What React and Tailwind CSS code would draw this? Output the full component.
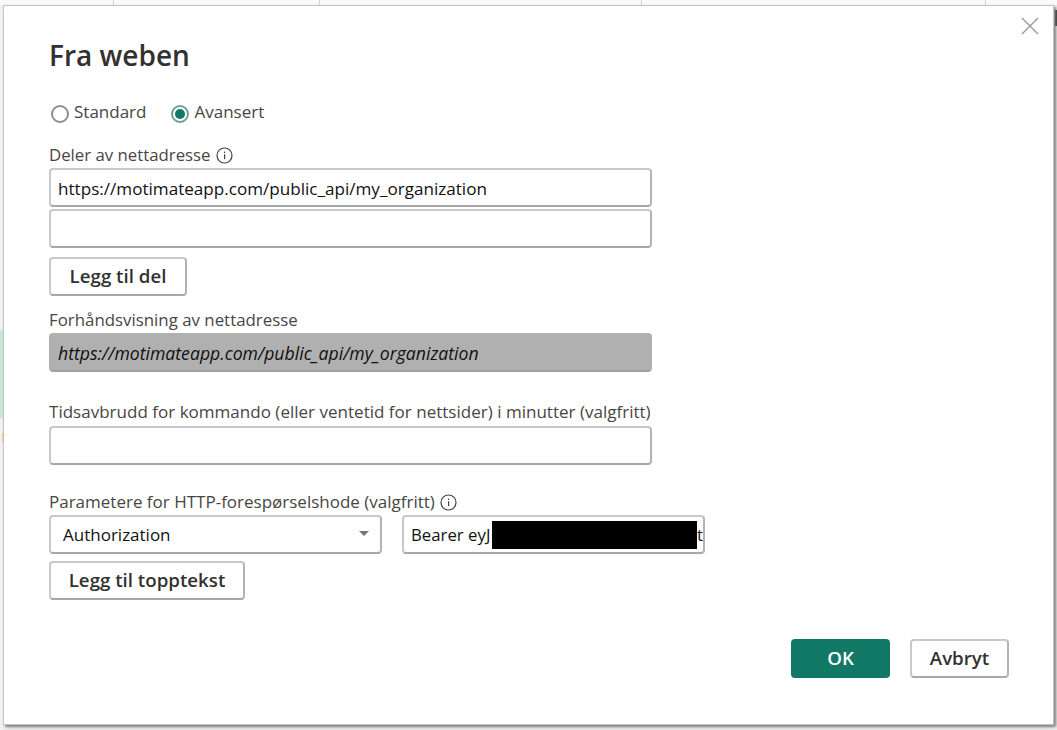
import React from "react";

const fieldClass =
  "h-[39px] rounded-[4px] border-2 border-[#c8c8c8] border-r-[#b4b4b4] border-b-[#a8a8a8] bg-white outline-none";

const buttonClass =
  "h-[39px] rounded-[4px] border-2 border-[#c8c8c8] border-r-[#b4b4b4] border-b-[#a8a8a8] bg-white text-[18.7px] font-semibold text-[#323130]";

const InfoIcon = () => (
  <svg width="17" height="17" viewBox="0 0 17 17" fill="none" className="ml-[5px]">
    <circle cx="8.5" cy="8.5" r="7.5" stroke="#444" strokeWidth="1.2" />
    <rect x="8" y="7.2" width="1.2" height="5" fill="#444" />
    <rect x="8" y="4.6" width="1.2" height="1.4" fill="#444" />
  </svg>
);

const Radio = ({ label, checked }) => (
  <label className="flex items-center">
    <span
      className={`mt-[1px] flex h-[18px] w-[18px] items-center justify-center rounded-full border-2 ${
        checked ? "border-[#6f9f94]" : "border-[#8f8f8f]"
      }`}
    >
      {checked && <span className="h-[10px] w-[10px] rounded-full bg-[#117865]" />}
    </span>
    <span className="ml-[5px] -mt-[3px]">{label}</span>
  </label>
);

export default function App() {
  return (
    <div className="relative h-screen w-full overflow-hidden bg-[#f1f1ef] font-['Open_Sans','Noto_Sans',sans-serif] text-[17px] text-[#484644]">
      {/* page behind the dialog */}
      <div className="flex h-[5px] bg-[#fafafa]">
        <div className="w-[114px] border-r border-[#d4d4d4]" />
        <div className="w-[206px] border-r border-[#d4d4d4]" />
        <div className="w-[322px] border-r border-[#d4d4d4]" />
        <div className="w-[344px] border-r border-[#d4d4d4]" />
      </div>
      <div className="absolute left-0 top-[330px] h-[88px] w-[3px] bg-[#c8e8d6]" />
      <div className="absolute left-[2px] top-[433px] h-[9px] w-[1px] bg-[#ffd27a]" />
      <div className="absolute right-0 top-[10px] h-[16px] w-[2px] bg-[#333]" />

      <div className="absolute left-[3px] top-[5px] h-[720px] w-[1051px] border border-[#c4c4c4] bg-white pl-[45px] shadow-[2px_2px_3px_#777]">
        <svg width="18" height="18" viewBox="0 0 18 18" className="absolute right-[14px] top-[11px]">
          <path d="M1 1 L17 17 M17 1 L1 17" stroke="#999" strokeWidth="1.4" />
        </svg>

        <h1 className="mt-[27px] text-[28px] leading-[44px] font-semibold text-[#323130]">Fra weben</h1>

        <div className="mt-[24px] flex h-[24px] items-center gap-[25px] pl-[2px]">
          <Radio label="Standard" />
          <Radio label="Avansert" checked />
        </div>

        <div className="mt-[19px] flex h-[22px] items-center text-[16.8px]">
          Deler av nettadresse
          <InfoIcon />
        </div>
        <input
          readOnly
          value="https://motimateapp.com/public_api/my_organization"
          className={`${fieldClass} mt-[2px] block w-[603px] px-[7px] pt-[1px] text-[17.1px] text-[#111]`}
        />
        <input readOnly className={`${fieldClass} mt-[2px] block w-[603px] px-[7px]`} />
        <button className={`${buttonClass} mt-[9px] block w-[138px]`}>Legg til del</button>

        <div className="mt-[13px] h-[22px] text-[16.85px] leading-[22px]">Forhåndsvisning av nettadresse</div>
        <div className="mt-[2px] flex h-[39px] w-[603px] items-center rounded-[4px] border-2 border-[#b0b0b0] border-b-[#a0a0a0] bg-[#b0b0b0] px-[7px] pt-[1px] text-[17.65px] text-[#111] italic">
          https://motimateapp.com/public_api/my_organization
        </div>

        <div className="mt-[29px] h-[22px] text-[17.05px] leading-[22px]">
          Tidsavbrudd for kommando (eller ventetid for nettsider) i minutter (valgfritt)
        </div>
        <input readOnly className={`${fieldClass} mt-[3px] block w-[603px] px-[7px]`} />

        <div className="mt-[26px] flex h-[22px] items-center">
          Parametere for HTTP-forespørselshode (valgfritt)
          <InfoIcon />
        </div>
        <div className="mt-[2px] flex">
          <div className={`${fieldClass} flex w-[333px] items-center justify-between pl-[12px] pr-[11px] text-[#111]`}>
            Authorization
            <span className="mt-[-2px] h-0 w-0 border-x-[5px] border-t-[5px] border-x-transparent border-t-[#777]" />
          </div>
          <div className={`${fieldClass} relative ml-[20px] flex w-[303px] items-center justify-between overflow-hidden pl-[7px] text-[16.8px] text-[#111]`}>
            <span>Bearer eyJ</span>
            <span>t</span>
            <div className="absolute left-[88px] top-[4px] h-[28px] w-[205px] bg-black" />
          </div>
        </div>
        <button className={`${buttonClass} mt-[7px] block w-[196px]`}>Legg til topptekst</button>

        <div className="absolute bottom-[46px] right-[44px] flex gap-[20px]">
          <button className="h-[39px] w-[99px] rounded-[4px] bg-[#117865] text-[18.7px] font-semibold text-white">OK</button>
          <button className={`${buttonClass} w-[99px]`}>Avbryt</button>
        </div>
      </div>
    </div>
  );
}
